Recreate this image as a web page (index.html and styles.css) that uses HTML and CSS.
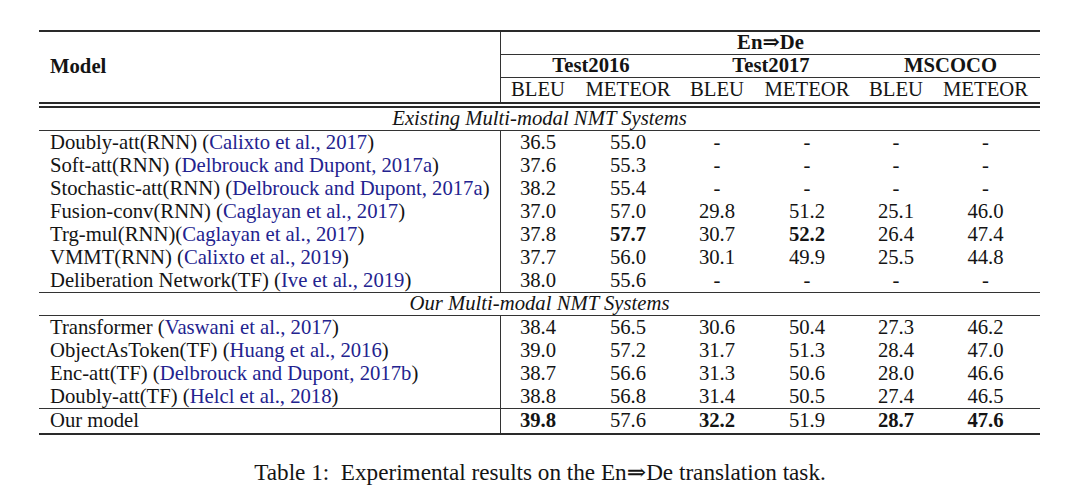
FILE: index.html
```html
<!DOCTYPE html>
<html>
<head>
<meta charset="utf-8">
<link rel="stylesheet" href="styles.css">
</head>
<body>
<div class="page">
  <div class="tbl">
    <div class="thead">
      <div class="model-h">Model</div>
      <div class="metrics">
        <div class="hrow lang">En⇒De</div>
        <div class="hrow sets"><span>Test2016</span><span>Test2017</span><span>MSCOCO</span></div>
        <div class="hrow cols"><span>BLEU</span><span>METEOR</span><span>BLEU</span><span>METEOR</span><span>BLEU</span><span>METEOR</span></div>
      </div>
    </div>

    <div class="section first">Existing Multi-modal NMT Systems</div>
    <div class="row"><div class="name">Doubly-att(RNN) (<span class="cite">Calixto et al., 2017</span>)</div><div>36.5</div><div>55.0</div><div>-</div><div>-</div><div>-</div><div>-</div></div>
    <div class="row"><div class="name">Soft-att(RNN) (<span class="cite">Delbrouck and Dupont, 2017a</span>)</div><div>37.6</div><div>55.3</div><div>-</div><div>-</div><div>-</div><div>-</div></div>
    <div class="row"><div class="name">Stochastic-att(RNN) (<span class="cite">Delbrouck and Dupont, 2017a</span>)</div><div>38.2</div><div>55.4</div><div>-</div><div>-</div><div>-</div><div>-</div></div>
    <div class="row"><div class="name">Fusion-conv(RNN) (<span class="cite">Caglayan et al., 2017</span>)</div><div>37.0</div><div>57.0</div><div>29.8</div><div>51.2</div><div>25.1</div><div>46.0</div></div>
    <div class="row"><div class="name">Trg-mul(RNN)(<span class="cite">Caglayan et al., 2017</span>)</div><div>37.8</div><div class="b">57.7</div><div>30.7</div><div class="b">52.2</div><div>26.4</div><div>47.4</div></div>
    <div class="row"><div class="name">VMMT(RNN) (<span class="cite">Calixto et al., 2019</span>)</div><div>37.7</div><div>56.0</div><div>30.1</div><div>49.9</div><div>25.5</div><div>44.8</div></div>
    <div class="row end"><div class="name">Deliberation Network(TF) (<span class="cite">Ive et al., 2019</span>)</div><div>38.0</div><div>55.6</div><div>-</div><div>-</div><div>-</div><div>-</div></div>

    <div class="section">Our Multi-modal NMT Systems</div>
    <div class="row"><div class="name">Transformer (<span class="cite">Vaswani et al., 2017</span>)</div><div>38.4</div><div>56.5</div><div>30.6</div><div>50.4</div><div>27.3</div><div>46.2</div></div>
    <div class="row"><div class="name">ObjectAsToken(TF) (<span class="cite">Huang et al., 2016</span>)</div><div>39.0</div><div>57.2</div><div>31.7</div><div>51.3</div><div>28.4</div><div>47.0</div></div>
    <div class="row"><div class="name">Enc-att(TF) (<span class="cite">Delbrouck and Dupont, 2017b</span>)</div><div>38.7</div><div>56.6</div><div>31.3</div><div>50.6</div><div>28.0</div><div>46.6</div></div>
    <div class="row end"><div class="name">Doubly-att(TF) (<span class="cite">Helcl et al., 2018</span>)</div><div>38.8</div><div>56.8</div><div>31.4</div><div>50.5</div><div>27.4</div><div>46.5</div></div>
    <div class="row last"><div class="name">Our model</div><div class="b">39.8</div><div>57.6</div><div class="b">32.2</div><div>51.9</div><div class="b">28.7</div><div class="b">47.6</div></div>
  </div>
  <p class="caption">Table 1:&nbsp; Experimental results on the En⇒De translation task.</p>
</div>
</body>
</html>
```

FILE: styles.css
```css
html, body {
  margin: 0;
  padding: 0;
  background: #ffffff;
}

body {
  font-family: "Liberation Serif", "Times New Roman", "DejaVu Serif", serif;
  font-size: 20.7px;
  color: #141414;
}

.page {
  padding-top: 30px;
}

.tbl {
  width: 1001px;
  margin-left: 39px;
  border-top: 2px solid #2a2a2a;
  border-bottom: 2px solid #2a2a2a;
}

.thead {
  display: grid;
  grid-template-columns: 462px 539px;
  border-bottom: 6px double #2a2a2a;
}

.model-h {
  font-weight: bold;
  padding-left: 11px;
  padding-bottom: 2px;
  display: flex;
  align-items: center;
  border-right: 1px solid #333;
}

.metrics {
  display: flex;
  flex-direction: column;
}

.hrow {
  line-height: 21px;
  height: 22px;
  text-align: center;
}

.lang {
  font-weight: bold;
  border-bottom: 1px solid #333;
}

.sets {
  display: grid;
  grid-template-columns: 180px 180px 179px;
  font-weight: bold;
  border-bottom: 1px solid #333;
}

.cols {
  display: grid;
  grid-template-columns: 74px 106px 72px 108px 70px 109px;
  height: 24px;
  line-height: 23px;
}

.section {
  font-style: italic;
  text-align: center;
  height: 22px;
  line-height: 21px;
  border-bottom: 1px solid #333;
}

.row {
  display: grid;
  grid-template-columns: 462px 74px 106px 72px 108px 70px 109px;
  height: 23px;
  line-height: 22px;
  text-align: center;
}

.row.end {
  border-bottom: 1px solid #333;
}

.row.last {
  height: 24px;
  line-height: 23px;
}

.name {
  text-align: left;
  padding-left: 11px;
  border-right: 1px solid #333;
  white-space: nowrap;
}

.cite {
  color: #23238f;
}

.b {
  font-weight: bold;
}

.caption {
  margin: 24px 0 0;
  text-align: center;
  font-size: 23.2px;
  line-height: 26px;
}
```
